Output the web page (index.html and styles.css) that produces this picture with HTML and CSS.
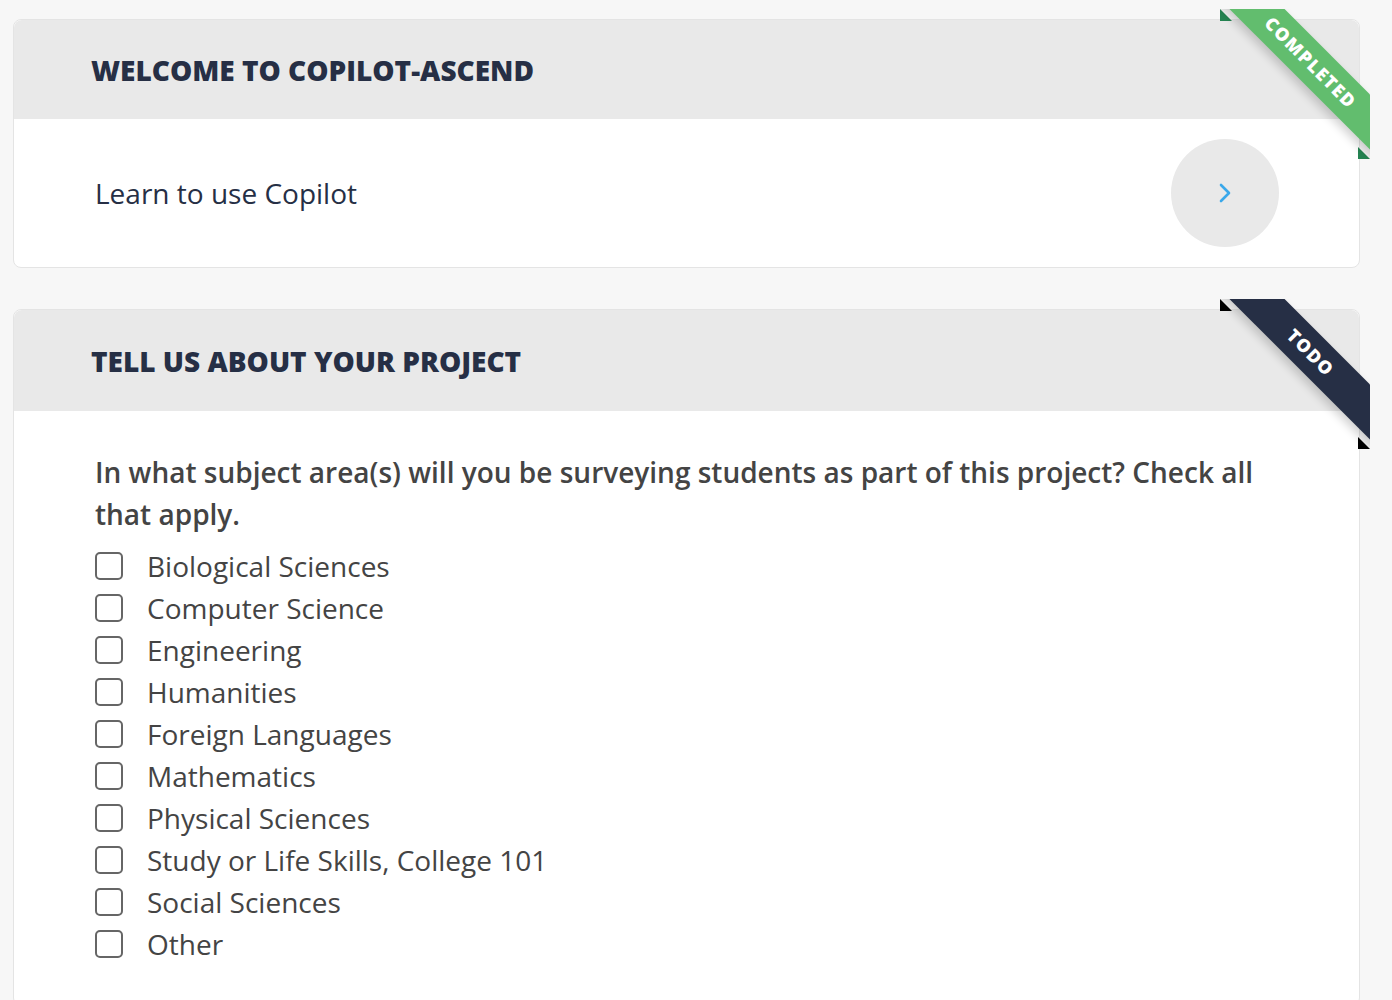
FILE: index.html
```html
<!DOCTYPE html>
<html>
<head>
<meta charset="utf-8">
<link rel="stylesheet" href="styles.css">
</head>
<body>
<div class="page">
  <section class="card">
    <div class="ribbon ribbon-done"><span>Completed</span></div>
    <header class="card-head"><h2>Welcome to Copilot-Ascend</h2></header>
    <div class="card-body row">
      <p class="lead">Learn to use Copilot</p>
      <button class="go" aria-label="Open">
        <svg width="16" height="24" viewBox="0 0 16 24"><path d="M4 4 L12 12 L4 20" fill="none" stroke="#3aa8ea" stroke-width="2.6" stroke-linecap="round" stroke-linejoin="round"/></svg>
      </button>
    </div>
  </section>

  <section class="card">
    <div class="ribbon ribbon-todo"><span>Todo</span></div>
    <header class="card-head tall"><h2>Tell us about your project</h2></header>
    <div class="card-body form">
      <p class="question">In what subject area(s) will you be surveying students as part of this project? Check all that apply.</p>
      <ul class="checks">
        <li><span class="box"></span>Biological Sciences</li>
        <li><span class="box"></span>Computer Science</li>
        <li><span class="box"></span>Engineering</li>
        <li><span class="box"></span>Humanities</li>
        <li><span class="box"></span>Foreign Languages</li>
        <li><span class="box"></span>Mathematics</li>
        <li><span class="box"></span>Physical Sciences</li>
        <li><span class="box"></span>Study or Life Skills, College 101</li>
        <li><span class="box"></span>Social Sciences</li>
        <li><span class="box"></span>Other</li>
      </ul>
    </div>
  </section>
</div>
</body>
</html>
```

FILE: styles.css
```css
html, body {
  margin: 0;
  padding: 0;
  background: #f7f7f7;
  font-family: "Open Sans", "Liberation Sans", sans-serif;
}

.page {
  padding: 19px 32px 0 13px;
  display: flex;
  flex-direction: column;
  gap: 41px;
}

.card {
  position: relative;
  background: #fff;
  border: 1px solid #e4e4e4;
  border-radius: 8px;
}

.card-head {
  background: #e9e9e9;
  height: 99px;
  display: flex;
  align-items: center;
  padding: 0 77px;
  border-radius: 8px 8px 0 0;
}

.card-head.tall {
  height: 101px;
}

.card-head h2 {
  margin: 0;
  font-size: 28px;
  font-weight: 800;
  color: #262f45;
  text-transform: uppercase;
  letter-spacing: 0;
}

.card-body.row {
  display: flex;
  align-items: center;
  justify-content: space-between;
  padding: 20px 80px 20px 81px;
}

.lead {
  margin: 0;
  font-size: 28px;
  color: #262f45;
}

.go {
  width: 108px;
  height: 108px;
  border-radius: 50%;
  border: 0;
  background: #e9e9e9;
  display: flex;
  align-items: center;
  justify-content: center;
  padding: 0;
}

.card-body.form {
  padding: 40px 80px 40px 81px;
}

.question {
  margin: 0 0 10px;
  font-size: 28px;
  line-height: 42px;
  font-weight: 600;
  color: #444;
}

.checks {
  list-style: none;
  margin: 0;
  padding: 0;
}

.checks li {
  display: flex;
  align-items: center;
  height: 42px;
  font-size: 28px;
  color: #444;
}

.box {
  width: 24px;
  height: 24px;
  border: 2px solid #666;
  border-radius: 5px;
  margin-right: 24px;
  flex: none;
}

/* corner ribbons */
.ribbon {
  position: absolute;
  top: -11px;
  right: -11px;
  width: 150px;
  height: 150px;
  overflow: hidden;
  z-index: 1;
}

.ribbon::before,
.ribbon::after {
  content: "";
  position: absolute;
  z-index: -1;
  border: 6px solid;
  border-top-color: transparent;
  border-right-color: transparent;
}

.ribbon::before { top: 0; left: 0; }
.ribbon::after { bottom: 0; right: 0; }

.ribbon span {
  position: absolute;
  display: block;
  width: 225px;
  left: -22px;
  top: 34px;
  padding: 10px 0;
  line-height: 19px;
  font-size: 18px;
  font-weight: 800;
  letter-spacing: 1.3px;
  color: #fff;
  text-transform: uppercase;
  text-align: center;
  transform: rotate(45deg);
  box-shadow: 0 5px 10px rgba(0, 0, 0, 0.18);
}

.ribbon-done span { background: #62bd6e; }
.ribbon-done::before, .ribbon-done::after { border-color: #258452; border-top-color: transparent; border-right-color: transparent; }

.ribbon-todo span { background: #262f45; }
.ribbon-todo::before, .ribbon-todo::after { border-color: #000; border-top-color: transparent; border-right-color: transparent; }
```
